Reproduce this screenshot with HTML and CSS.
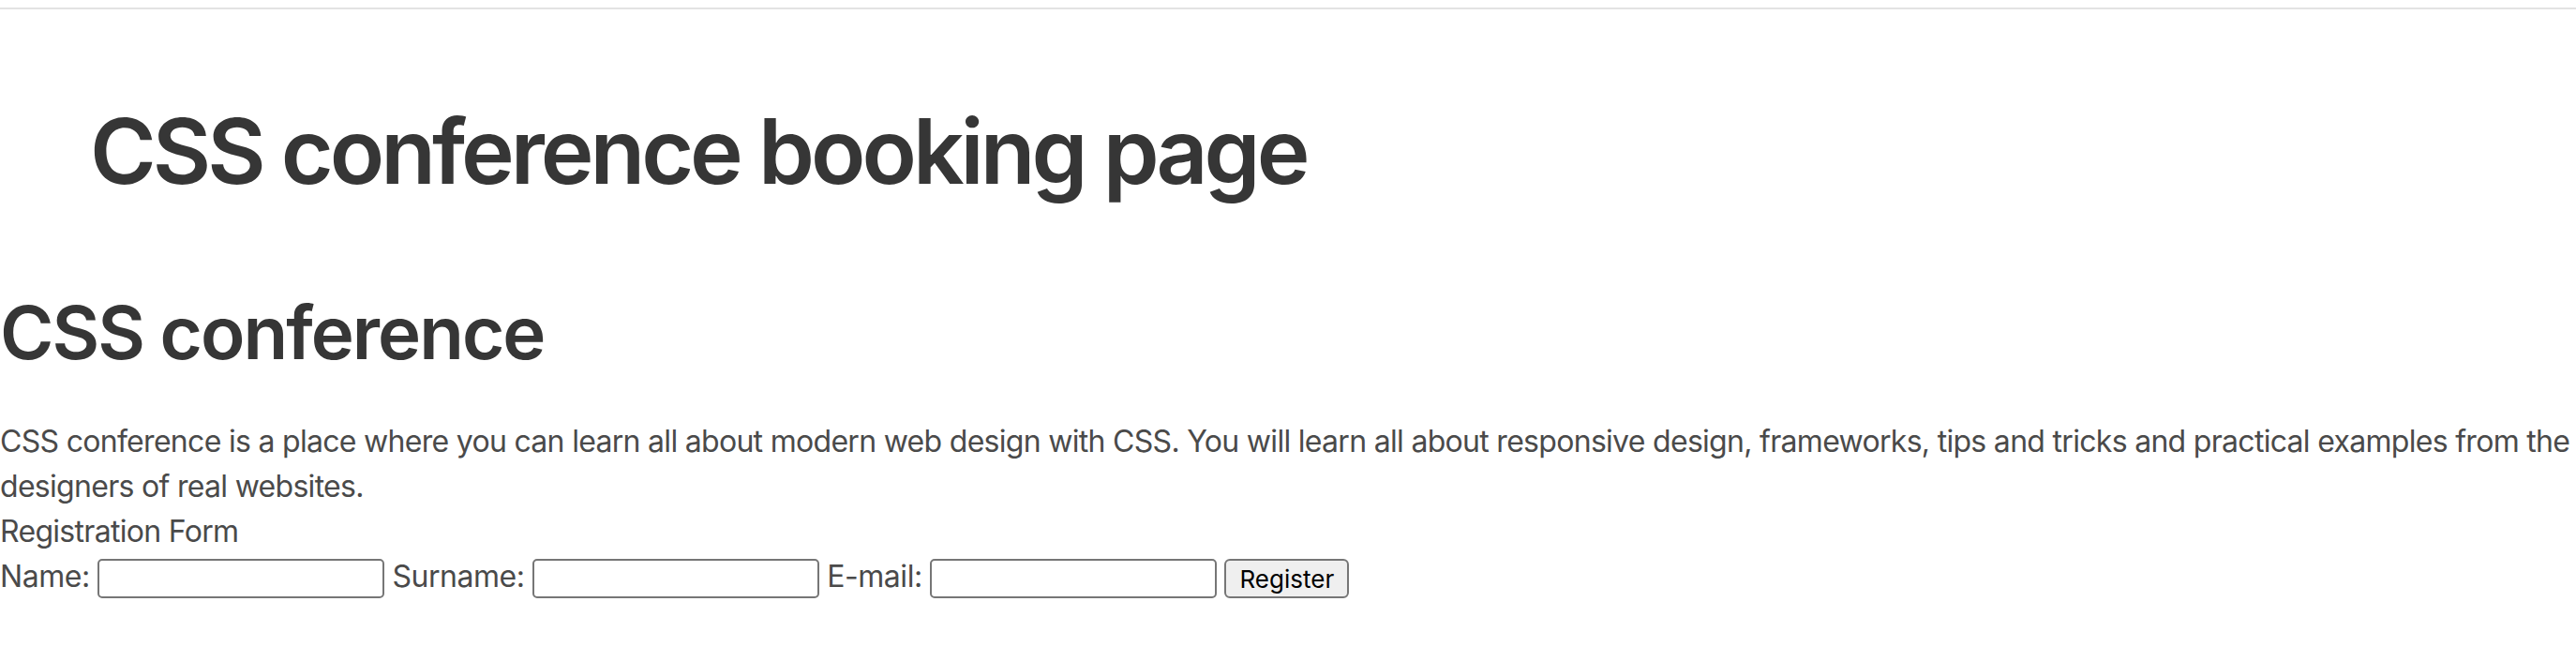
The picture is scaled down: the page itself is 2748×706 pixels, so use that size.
FILE: index.html
```html
<!DOCTYPE html>
<html lang="en">
<head>
<meta charset="utf-8">
<title>CSS conference booking page</title>
<link rel="stylesheet" href="styles.css">
</head>
<body>
<header class="site-header">
  <h1 class="page-title">CSS conference booking page</h1>
</header>
<main class="content">
  <h2 class="section-title">CSS conference</h2>
  <p class="intro">CSS conference is a place where you can learn all about modern web design with CSS. You will learn all about responsive design, frameworks, tips and tricks and practical examples from the designers of real websites.</p>
  <form class="registration">
    <div class="form-title">Registration Form</div>
    <div class="form-row"><label for="name">Name:</label> <input class="field" type="text" id="name"> <label for="surname">Surname:</label> <input class="field" type="text" id="surname"> <label for="email">E-mail:</label> <input class="field" type="email" id="email"> <button class="submit" type="button">Register</button></div>
  </form>
</main>
</body>
</html>
```
FILE: styles.css
```css
html {
  background: #ffffff;
}

body {
  margin: 0;
  padding-top: 8px;
  font-family: Inter, "Liberation Sans", sans-serif;
  font-size: 32px;
  line-height: 48px;
  letter-spacing: -0.7px;
  color: #4a4a4a;
}

.site-header {
  border-top: 2px solid #e3e3e3;
  padding: 94px 96px 0;
}

.page-title {
  margin: 0;
  font-size: 96px;
  line-height: 1.2;
  font-weight: 600;
  letter-spacing: -4px;
  color: #363636;
}

.content {
  padding-top: 89px;
}

.section-title {
  margin: 0 0 45px;
  font-size: 78px;
  line-height: 1.2;
  font-weight: 600;
  letter-spacing: -2px;
  color: #363636;
}

.intro {
  margin: 0;
}

.registration {
  margin: 0;
}

.form-title {
  margin: 0;
}

.form-row label {
  color: #4a4a4a;
  letter-spacing: -0.45px;
}

.field {
  box-sizing: border-box;
  width: 306px;
  height: 42px;
  padding: 0 4px;
  border: 2px solid #767676;
  border-radius: 5px;
  background: #ffffff;
  font-family: Inter, "Liberation Sans", sans-serif;
  font-size: 26px;
  vertical-align: middle;
}

.submit {
  box-sizing: border-box;
  width: 133px;
  height: 42px;
  padding: 0;
  border: 2px solid #767676;
  border-radius: 6px;
  background: #efefef;
  color: #000000;
  font-family: Inter, "Liberation Sans", sans-serif;
  font-size: 26px;
  letter-spacing: 0;
  vertical-align: middle;
}
```
